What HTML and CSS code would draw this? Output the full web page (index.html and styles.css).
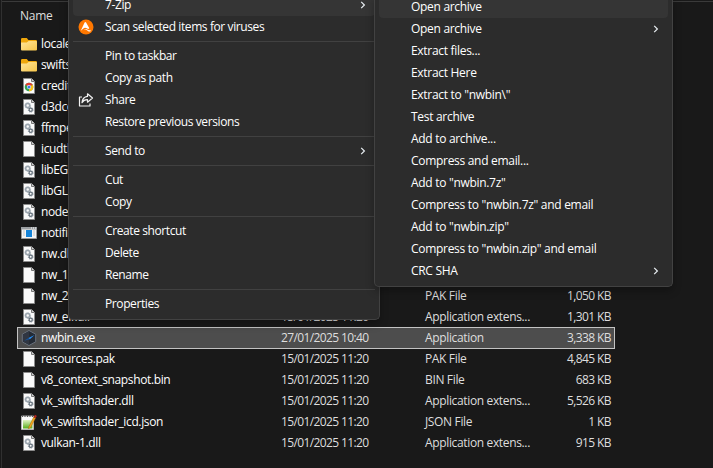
FILE: index.html
```html
<!DOCTYPE html>
<html lang="en">
<head>
<meta charset="utf-8">
<title>nwbin</title>
<link rel="stylesheet" href="styles.css">
</head>
<body>
<svg class="defs" aria-hidden="true">
  <defs>
    <linearGradient id="fg" x1="0" y1="0" x2="1" y2="1"><stop offset="0" stop-color="#ffe59a"/><stop offset="1" stop-color="#f7c64a"/></linearGradient>
    <linearGradient id="gg" x1="0" y1="0" x2="0" y2="1"><stop offset="0" stop-color="#e2f3c4"/><stop offset="1" stop-color="#57ad1c"/></linearGradient>
    <symbol id="folder" viewBox="0 0 16 16"><path d="M0 3.200Q0 2 1.200 2h4.600L7.400 4H14.800Q16 4 16 5.200V10H0z" fill="#efa70c"/><path d="M0 6.500h5.800L7.600 5H15q1 0 1 1v7.500q0 1-1 1H1q-1 0-1-1z" fill="url(#fg)"/></symbol>
    <symbol id="page" viewBox="0 0 16 16"><path d="M2.500.5h8l3 3v12h-11z" fill="#fafafa" stroke="#8b8b8b"/><path d="M10.500.5v3h3" fill="#d0d0d0" stroke="#777"/></symbol>
    <symbol id="dll" viewBox="0 0 16 16"><use href="#page"/><circle cx="6.700" cy="6.500" r="2" fill="none" stroke="#9aa4ad" stroke-width="1.500"/><circle cx="6.700" cy="6.500" r="2.900" fill="none" stroke="#9aa4ad" stroke-dasharray="1 1.200"/><circle cx="9.700" cy="10.800" r="1.600" fill="none" stroke="#66727d" stroke-width="1.300"/><circle cx="9.700" cy="10.800" r="2.400" fill="none" stroke="#66727d" stroke-width=".8" stroke-dasharray=".9 1"/></symbol>
    <symbol id="chrome" viewBox="0 0 16 16"><use href="#page"/><circle cx="8" cy="9" r="4.300" fill="#32a350"/><path d="M8 9L4.280 6.850A4.300 4.300 0 0 1 11.720 6.850z" fill="#e33b2e"/><path d="M8 9l3.720-2.150A4.300 4.300 0 0 1 8 13.300z" fill="#fbc116"/><circle cx="8" cy="9" r="2.100" fill="#fff"/><circle cx="8" cy="9" r="1.600" fill="#3b78e7"/></symbol>
    <symbol id="app" viewBox="0 0 16 16"><path d="M.5 2.500h15v11H.5z" fill="#f4f4f4" stroke="#9a9a9a"/><path d="M0 2h16v2.500H0z" fill="#9a9ea1"/><path d="M10 3h1m1 0h1m1 0h1" stroke="#fff"/><path d="M5 5h6v7H5z" fill="#1684d8"/><path d="M2 6h2M2 8h2M2 10h2M12 6h2M12 8h2M12 10h2" stroke="#c8c8c8"/></symbol>
    <symbol id="nw" viewBox="0 0 16 16"><path d="M8 .5l6.700 3.700v7.600L8 15.500l-6.700-3.700V4.200z" fill="#252b35" stroke="#69717d"/><path d="M8 1v14L2 11.500v-7z" fill="#343c49" opacity=".7"/><path d="M13.500 5L8.800 9.300 7.500 7.900z" fill="#2491ff"/><path d="M3 10.700l4.500-2.800 1.300 1.400z" fill="#16549b"/></symbol>
    <symbol id="note" viewBox="0 0 16 16"><path d="M.5 2h12v13.500H.5z" fill="#fafafa" stroke="#b5b5b5"/><path d="M2 6h9.500v8.500H2z" fill="url(#gg)"/><path d="M1.500 1v2M4 1v2M6.500 1v2M9 1v2M11.500 1v2" stroke="#555"/><path d="M8 12.500l-.8 2.200 2.300-1 5-9.500-1.800-1.200z" fill="#f3a51c" stroke="#8a5b14" stroke-width=".4"/><path d="M12.700 3l1.200-2.200L15.900 2l-1.400 2.200z" fill="#b3261e"/></symbol>
    <symbol id="chev" viewBox="0 0 6 8"><path d="M1.200.8L4.400 4 1.200 7.200" fill="none" stroke="#e8eef2" stroke-width="1.200"/></symbol>
  </defs>
</svg>
<main class="explorer">
  <div class="header">Name</div>
  <div class="rows">
    <div class="row"><svg class="icon"><use href="#folder"/></svg><span class="name">locales</span></div>
    <div class="row"><svg class="icon"><use href="#folder"/></svg><span class="name">swiftshader</span></div>
    <div class="row"><svg class="icon"><use href="#chrome"/></svg><span class="name">credits.html</span></div>
    <div class="row"><svg class="icon"><use href="#dll"/></svg><span class="name">d3dcomp</span></div>
    <div class="row"><svg class="icon"><use href="#dll"/></svg><span class="name">ffmpeg.dll</span></div>
    <div class="row"><svg class="icon"><use href="#page"/></svg><span class="name">icudtl.dat</span></div>
    <div class="row"><svg class="icon"><use href="#dll"/></svg><span class="name">libEGL.dll</span></div>
    <div class="row"><svg class="icon"><use href="#dll"/></svg><span class="name">libGLESv2</span></div>
    <div class="row"><svg class="icon"><use href="#dll"/></svg><span class="name">node.dll</span></div>
    <div class="row"><svg class="icon"><use href="#app"/></svg><span class="name">notificati</span></div>
    <div class="row"><svg class="icon"><use href="#dll"/></svg><span class="name">nw.dll</span></div>
    <div class="row"><svg class="icon"><use href="#page"/></svg><span class="name">nw_100</span></div>
    <div class="row"><svg class="icon"><use href="#page"/></svg><span class="name">nw_200</span><span class="date"></span><span class="type">PAK File</span><span class="size">1,050 KB</span></div>
    <div class="row"><svg class="icon"><use href="#dll"/></svg><span class="name">nw_elf.dll</span><span class="date">15/01/2025 11:20</span><span class="type">Application extens...</span><span class="size">1,301 KB</span></div>
    <div class="row selected"><svg class="icon"><use href="#nw"/></svg><span class="name">nwbin.exe</span><span class="date">27/01/2025 10:40</span><span class="type">Application</span><span class="size">3,338 KB</span></div>
    <div class="row"><svg class="icon"><use href="#page"/></svg><span class="name">resources.pak</span><span class="date">15/01/2025 11:20</span><span class="type">PAK File</span><span class="size">4,845 KB</span></div>
    <div class="row"><svg class="icon"><use href="#page"/></svg><span class="name">v8_context_snapshot.bin</span><span class="date">15/01/2025 11:20</span><span class="type">BIN File</span><span class="size">683 KB</span></div>
    <div class="row"><svg class="icon"><use href="#dll"/></svg><span class="name">vk_swiftshader.dll</span><span class="date">15/01/2025 11:20</span><span class="type">Application extens...</span><span class="size">5,526 KB</span></div>
    <div class="row"><svg class="icon"><use href="#note"/></svg><span class="name">vk_swiftshader_icd.json</span><span class="date">15/01/2025 11:20</span><span class="type">JSON File</span><span class="size">1 KB</span></div>
    <div class="row"><svg class="icon"><use href="#dll"/></svg><span class="name">vulkan-1.dll</span><span class="date">15/01/2025 11:20</span><span class="type">Application extens...</span><span class="size">915 KB</span></div>
  </div>
</main>
<div class="menu context">
  <div class="item hover">7-Zip<svg class="chev"><use href="#chev"/></svg></div>
  <div class="item"><svg class="glyph" viewBox="0 0 16 16"><circle cx="8" cy="8" r="7.500" fill="#ff7800"/><path d="M2.800 11.800L6.600 3.600q.7-1.200 1.500 0l3.200 5.600-1 .9-2.200-1.200q-1.600-.6-2.700.5z" fill="#fff"/><path d="M5.600 11.300q1.200-1.200 2.600-.5l2.500 1.600q1.400.6 1.900-.5l-.3-1.100-1.100.7-2.800-1.500q-1.500-.5-2.800 1.300z" fill="#fff"/></svg>Scan selected items for viruses</div>
  <div class="sep"></div>
  <div class="item">Pin to taskbar</div>
  <div class="item">Copy as path</div>
  <div class="item"><svg class="glyph" viewBox="0 0 16 16"><path d="M4 5H1.500v9h10.500v-2.500M9.500 1.800l5 4.200-5 4.200V7.700Q6 7.500 4 10.700 4.500 5 9.500 4.400z" fill="none" stroke="#f2f2f2" stroke-width="1.200" stroke-linejoin="round"/></svg>Share</div>
  <div class="item">Restore previous versions</div>
  <div class="sep"></div>
  <div class="item">Send to<svg class="chev"><use href="#chev"/></svg></div>
  <div class="sep"></div>
  <div class="item">Cut</div>
  <div class="item">Copy</div>
  <div class="sep"></div>
  <div class="item">Create shortcut</div>
  <div class="item">Delete</div>
  <div class="item">Rename</div>
  <div class="sep"></div>
  <div class="item">Properties</div>
</div>
<div class="menu submenu">
  <div class="item hover">Open archive</div>
  <div class="item">Open archive<svg class="chev"><use href="#chev"/></svg></div>
  <div class="item">Extract files...</div>
  <div class="item">Extract Here</div>
  <div class="item">Extract to "nwbin\"</div>
  <div class="item">Test archive</div>
  <div class="item">Add to archive...</div>
  <div class="item">Compress and email...</div>
  <div class="item">Add to "nwbin.7z"</div>
  <div class="item">Compress to "nwbin.7z" and email</div>
  <div class="item">Add to "nwbin.zip"</div>
  <div class="item">Compress to "nwbin.zip" and email</div>
  <div class="item">CRC SHA<svg class="chev"><use href="#chev"/></svg></div>
</div>
</body>
</html>
```
FILE: styles.css
```css
* { box-sizing: border-box; }
body {
  margin: 0;
  width: 713px;
  height: 468px;
  overflow: hidden;
  position: relative;
  background: #191919;
  color: #fff;
  font: 12px/20px "Open Sans", "Noto Sans", sans-serif;
  letter-spacing: -0.25px;
  white-space: nowrap;
}
.defs { position: absolute; width: 0; height: 0; }
.explorer {
  height: 468px;
  margin-left: 1px;
  border-left: 1px solid #303030;
  padding-left: 15px;
  overflow: hidden;
}
.header {
  height: 33px;
  margin-left: -15px;
  padding: 5px 0 0 18px;
  border-top: 1px solid transparent;
  background: linear-gradient(#3a3a3a, #3a3a3a) 0 0 / 100% 1px no-repeat;
  color: #dedede;
}
.row {
  display: grid;
  grid-template-columns: 20px 240px 144px 126px 60px;
  align-items: center;
  width: 598px;
  height: 21px;
  padding-left: 3px;
  border: 1px solid transparent;
  color: #dedede;
}
.rows { width: 598px; }
.icon { width: 16px; height: 16px; display: block; }
.name { color: #fff; letter-spacing: -0.37px; }
.date { letter-spacing: -0.62px; }
.type { letter-spacing: -0.35px; }
.size { letter-spacing: -0.6px; text-align: right; }
.selected {
  height: 22px;
  margin-bottom: -1px;
  background: #4d4d4d;
  border-color: #c3c3c3;
}
.menu {
  position: absolute;
  background: #2c2c2c;
  border: 1px solid #424242;
  border-top: 0;
  border-radius: 0 0 5px 5px;
  padding: 0 4px 4px;
  box-shadow: 0 4px 8px rgba(0, 0, 0, .28);
}
.context { left: 68px; top: -6px; width: 312px; letter-spacing: -0.4px; }
.submenu { left: 374px; top: -4px; width: 299px; letter-spacing: -0.3px; }
.item {
  display: flex;
  align-items: center;
  height: 22px;
  padding-left: 32px;
  padding-right: 9px;
  border-radius: 4px;
}
.hover { background: #353535; }
.glyph { width: 16px; height: 16px; margin-left: -27px; margin-right: 11px; }
.chev { width: 6px; height: 8px; margin-left: auto; }
.sep { height: 7px; padding: 3px 0; background: #414141 content-box; }
```
